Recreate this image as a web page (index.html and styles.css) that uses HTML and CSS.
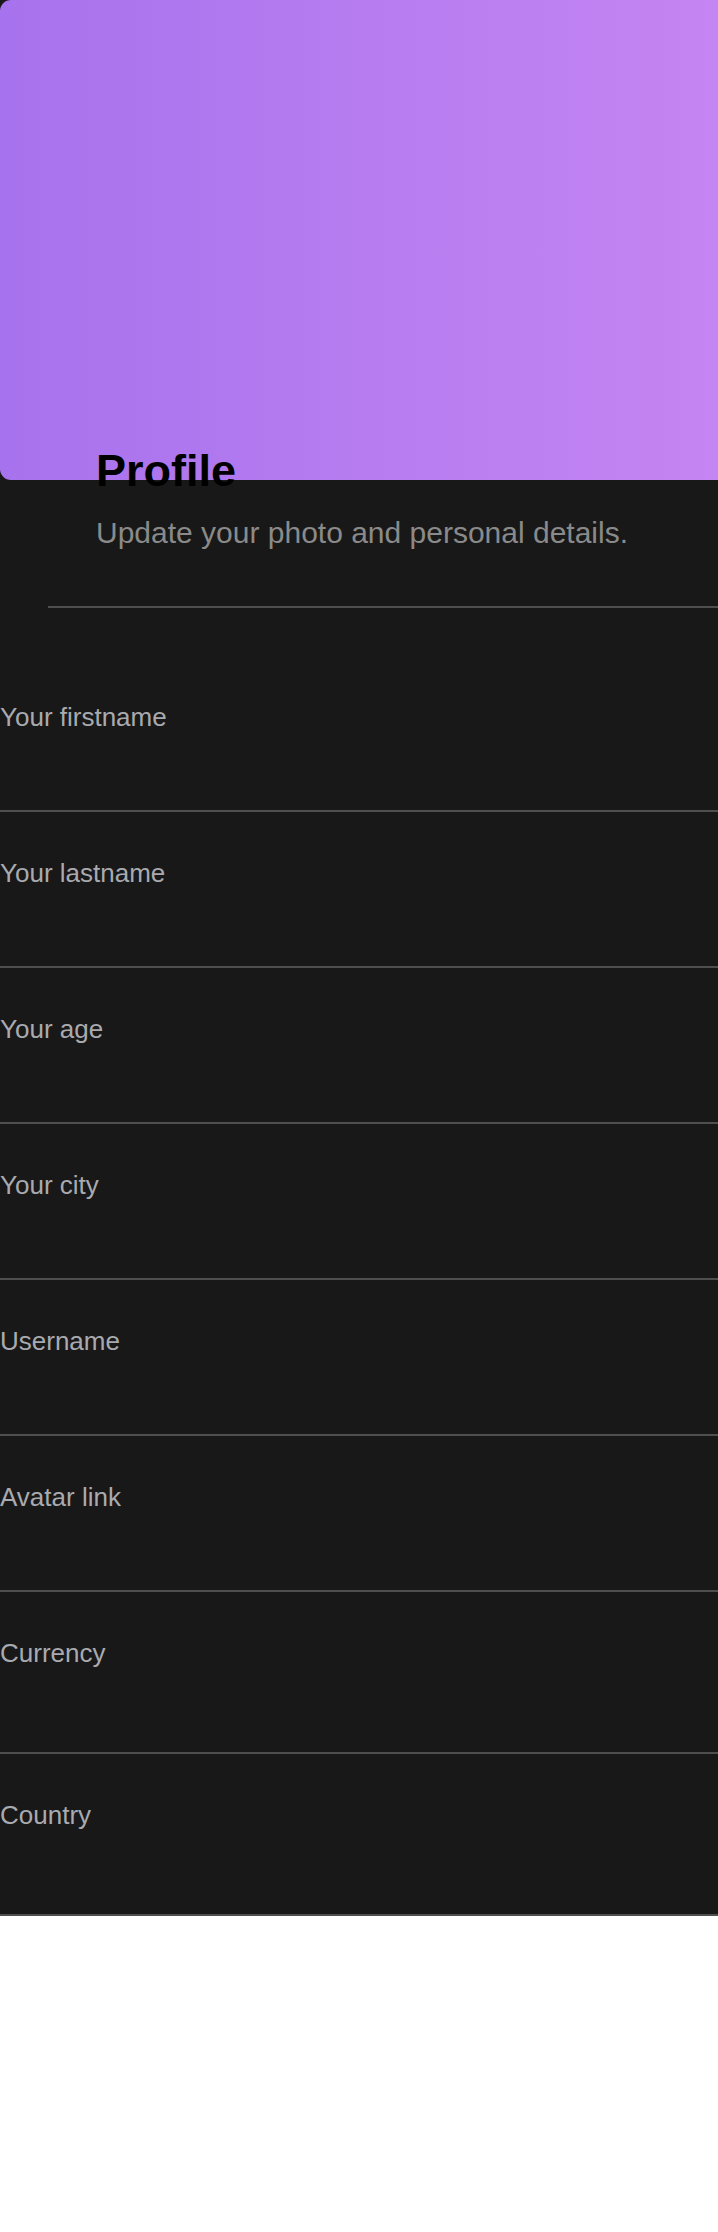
FILE: index.html
```html
<!DOCTYPE html>
<html lang="en">
<head>
<meta charset="utf-8">
<title>Profile</title>
<link rel="stylesheet" href="styles.css">
</head>
<body>
<main class="page">
  <div class="cover"></div>
  <header class="intro">
    <h1 class="intro-title">Profile</h1>
    <p class="intro-sub">Update your photo and personal details.</p>
  </header>
  <hr class="divider">
  <form class="form">
    <label class="field"><span class="field-label">Your firstname</span><input class="field-input" type="text"></label>
    <label class="field"><span class="field-label">Your lastname</span><input class="field-input" type="text"></label>
    <label class="field"><span class="field-label">Your age</span><input class="field-input" type="text"></label>
    <label class="field"><span class="field-label">Your city</span><input class="field-input" type="text"></label>
    <label class="field"><span class="field-label">Username</span><input class="field-input" type="text"></label>
    <label class="field"><span class="field-label">Avatar link</span><input class="field-input" type="text"></label>
    <label class="field field-select"><span class="field-label">Currency</span><input class="field-input" type="text"></label>
    <label class="field field-select"><span class="field-label">Country</span><input class="field-input" type="text"></label>
  </form>
</main>
</body>
</html>
```
FILE: styles.css
```css
* { box-sizing: border-box; }

html, body {
  margin: 0;
  padding: 0;
  background: #ffffff;
  font-family: "Liberation Sans", Arial, sans-serif;
}

.page {
  background: #181818;
  display: flex;
  flex-direction: column;
}

.cover {
  height: 480px;
  background: linear-gradient(90deg, #a772ed 0%, #b67cf0 50%, #c585f2 100%);
  border-radius: 11px 0 0 11px;
}

.intro {
  margin-top: -35px;
  padding-left: 96px;
  display: flex;
  flex-direction: column;
  gap: 18px;
}

.intro-title {
  margin: 0;
  font-size: 45px;
  line-height: 52px;
  font-weight: 700;
  color: #000000;
}

.intro-sub {
  margin: 0;
  font-size: 30px;
  line-height: 36px;
  color: #8a8a8a;
}

.divider {
  margin: 55px 0 48px 48px;
  border: 0;
  height: 2px;
  background: #4f4f4f;
}

.form {
  display: flex;
  flex-direction: column;
}

.field {
  display: flex;
  flex-direction: column;
  height: 156px;
  padding-top: 46px;
  border-bottom: 2px solid #4f4f4f;
}

.field-select {
  height: 162px;
}

.field-label {
  font-size: 26px;
  line-height: 30px;
  color: #a9aaaf;
}

.field-input {
  margin-top: 8px;
  height: 50px;
  background: transparent;
  border: 0;
  outline: none;
  color: #dddddd;
  font: inherit;
  font-size: 24px;
}
```
